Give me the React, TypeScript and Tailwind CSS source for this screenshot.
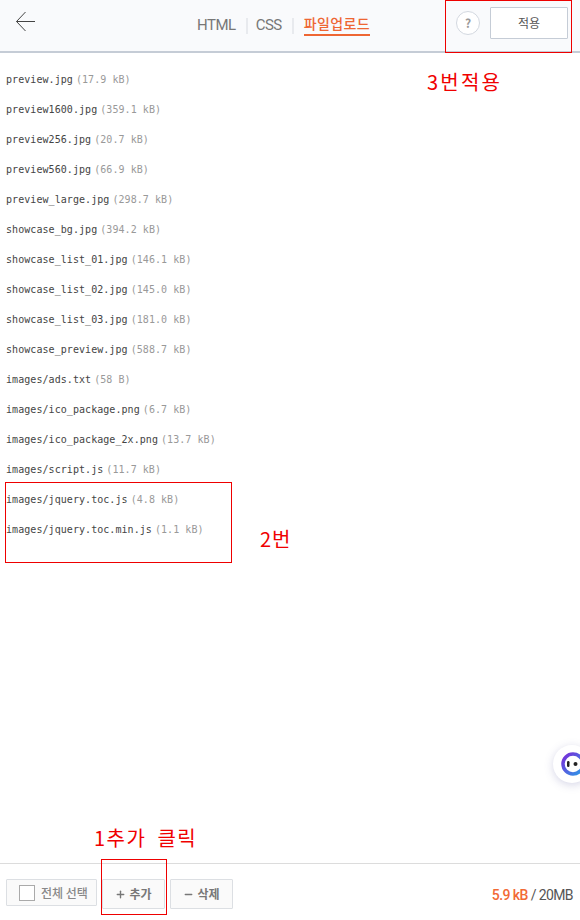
import { Plus, Minus } from "lucide-react";

const files = [
  ["preview.jpg", "17.9 kB"],
  ["preview1600.jpg", "359.1 kB"],
  ["preview256.jpg", "20.7 kB"],
  ["preview560.jpg", "66.9 kB"],
  ["preview_large.jpg", "298.7 kB"],
  ["showcase_bg.jpg", "394.2 kB"],
  ["showcase_list_01.jpg", "146.1 kB"],
  ["showcase_list_02.jpg", "145.0 kB"],
  ["showcase_list_03.jpg", "181.0 kB"],
  ["showcase_preview.jpg", "588.7 kB"],
  ["images/ads.txt", "58 B"],
  ["images/ico_package.png", "6.7 kB"],
  ["images/ico_package_2x.png", "13.7 kB"],
  ["images/script.js", "11.7 kB"],
  ["images/jquery.toc.js", "4.8 kB"],
  ["images/jquery.toc.min.js", "1.1 kB"],
];

const kr = "font-['Noto_Sans_CJK_KR','Noto_Sans',sans-serif]";

export default function App() {
  return (
    <div className={`relative flex h-[920px] w-[580px] flex-col overflow-hidden bg-white ${kr}`}>
      {/* 상단 탭 */}
      <header className="flex h-[53px] shrink-0 items-center border-b-2 border-[#c5ccd6] bg-[#f9fafc]">
        <button className="ml-[15px] mb-[9px] text-[#444]">
          <svg width="21" height="21" viewBox="0 0 21 21" fill="none" stroke="currentColor" strokeWidth="1">
            <path d="M20 10.5H1.5M10.5 1L1.5 10.5L10.5 20" />
          </svg>
        </button>
        <nav className="ml-[161px] flex items-center text-[15px] text-[#777]">
          <span className="font-['Roboto',sans-serif] tracking-[-0.5px]">HTML</span>
          <span className="ml-[10px] mr-[8px] h-[16px] w-[2px] bg-[#e8eaee]" />
          <span className="font-['Roboto',sans-serif] tracking-[-0.5px]">CSS</span>
          <span className="mx-[10px] h-[16px] w-[2px] bg-[#e8eaee]" />
          <span className="relative -top-[1px] border-b-2 border-[#ee6633] pb-[1px] text-[14px] leading-[20px] font-medium tracking-[0.4px] text-[#ee6633]">
            파일업로드
          </span>
        </nav>
        <div className="ml-auto mr-[12px] mb-[5px] flex items-center gap-[10px]">
          <span className="flex h-[24px] w-[24px] items-center justify-center rounded-full border border-[#d3d8e0] bg-white text-[12px] font-bold text-[#999]">
            ?
          </span>
          <button className="h-[32px] w-[78px] rounded-[1px] border border-[#c5ccd6] bg-white text-[12px] text-[#555]">
            적용
          </button>
        </div>
      </header>

      {/* 파일 목록 */}
      <ul className="flex-1 pt-[11px] pl-[6px] font-['DejaVu_Sans_Mono',monospace] text-[10px] tracking-[0.06px]">
        {files.map(([name, size]) => (
          <li key={name} className="flex h-[30px] items-center gap-[3px] text-[#444]">
            <span>{name}</span>
            <span className="text-[#999]">({size})</span>
          </li>
        ))}
      </ul>

      {/* 하단 바 */}
      <footer className="flex h-[57px] shrink-0 items-start border-t border-[#dcdcdc] bg-white pt-[15px] pl-[6px] pr-[7px]">
        <button className="flex h-[27px] w-[91px] items-center gap-[6px] rounded-[1px] border border-[#dcdfe3] bg-[#fafafa] pl-[12px] text-[12px] font-medium text-[#888]">
          <span className="h-[16px] w-[16px] border border-[#aaa] bg-white" />
          전체 선택
        </button>
        <button className="ml-[5px] flex h-[30px] w-[63px] items-center justify-center gap-[3px] rounded-[1px] border border-[#dcdfe3] bg-[#fafafa] text-[12px] font-bold text-[#777]">
          <Plus size={11} strokeWidth={3} />
          추가
        </button>
        <button className="ml-[5px] flex h-[30px] w-[63px] items-center justify-center gap-[3px] rounded-[1px] border border-[#dcdfe3] bg-[#fafafa] text-[12px] font-bold text-[#777]">
          <Minus size={11} strokeWidth={3} />
          삭제
        </button>
        <div className="ml-auto mt-[7px] flex items-center gap-[3px] font-['Roboto',sans-serif] text-[14px] leading-[18px] tracking-[-0.6px] text-[#555]">
          <span className="font-medium text-[#f26a35]">5.9 kB</span>
          <span>/ 20MB</span>
        </div>
      </footer>

      {/* 챗봇 버튼 */}
      <div className="absolute left-[553px] top-[745px] flex h-[38px] w-[38px] items-center rounded-full bg-white pl-[8px] shadow-[0_2px_8px_rgba(90,90,160,0.25)]">
        <svg width="24" height="24" viewBox="0 0 24 24" fill="none">
          <defs>
            <linearGradient id="bot" x1="0" y1="0" x2="1" y2="1">
              <stop offset="0" stopColor="#7a2bd8" />
              <stop offset="1" stopColor="#2a9be8" />
            </linearGradient>
          </defs>
          <circle cx="12" cy="12" r="10" stroke="url(#bot)" strokeWidth="3.5" />
          <rect x="6" y="9" width="2.5" height="6" rx="1.2" fill="#222" />
          <circle cx="14.5" cy="12" r="2" fill="#222" />
        </svg>
      </div>

      {/* 빨간 안내 표시 */}
      <div className="absolute left-[445px] top-0 h-[53px] w-[127px] border border-[#ee0000]" />
      <div className="absolute left-[5px] top-[482px] h-[81px] w-[227px] border border-[#ee0000]" />
      <div className="absolute left-[101px] top-[859px] h-[56px] w-[66px] border border-[#ee0000]" />
      <span className="absolute left-[427px] top-[67px] text-[20px] leading-[30px] tracking-[2.2px] text-[#f00000]">3번적용</span>
      <span className="absolute left-[260px] top-[524px] text-[20px] leading-[30px] tracking-[1px] text-[#f00000]">2번</span>
      <span className="absolute left-[94px] top-[823px] text-[20px] leading-[30px] tracking-[1.5px] [word-spacing:5px] text-[#f00000]">1추가 클릭</span>
    </div>
  );
}
